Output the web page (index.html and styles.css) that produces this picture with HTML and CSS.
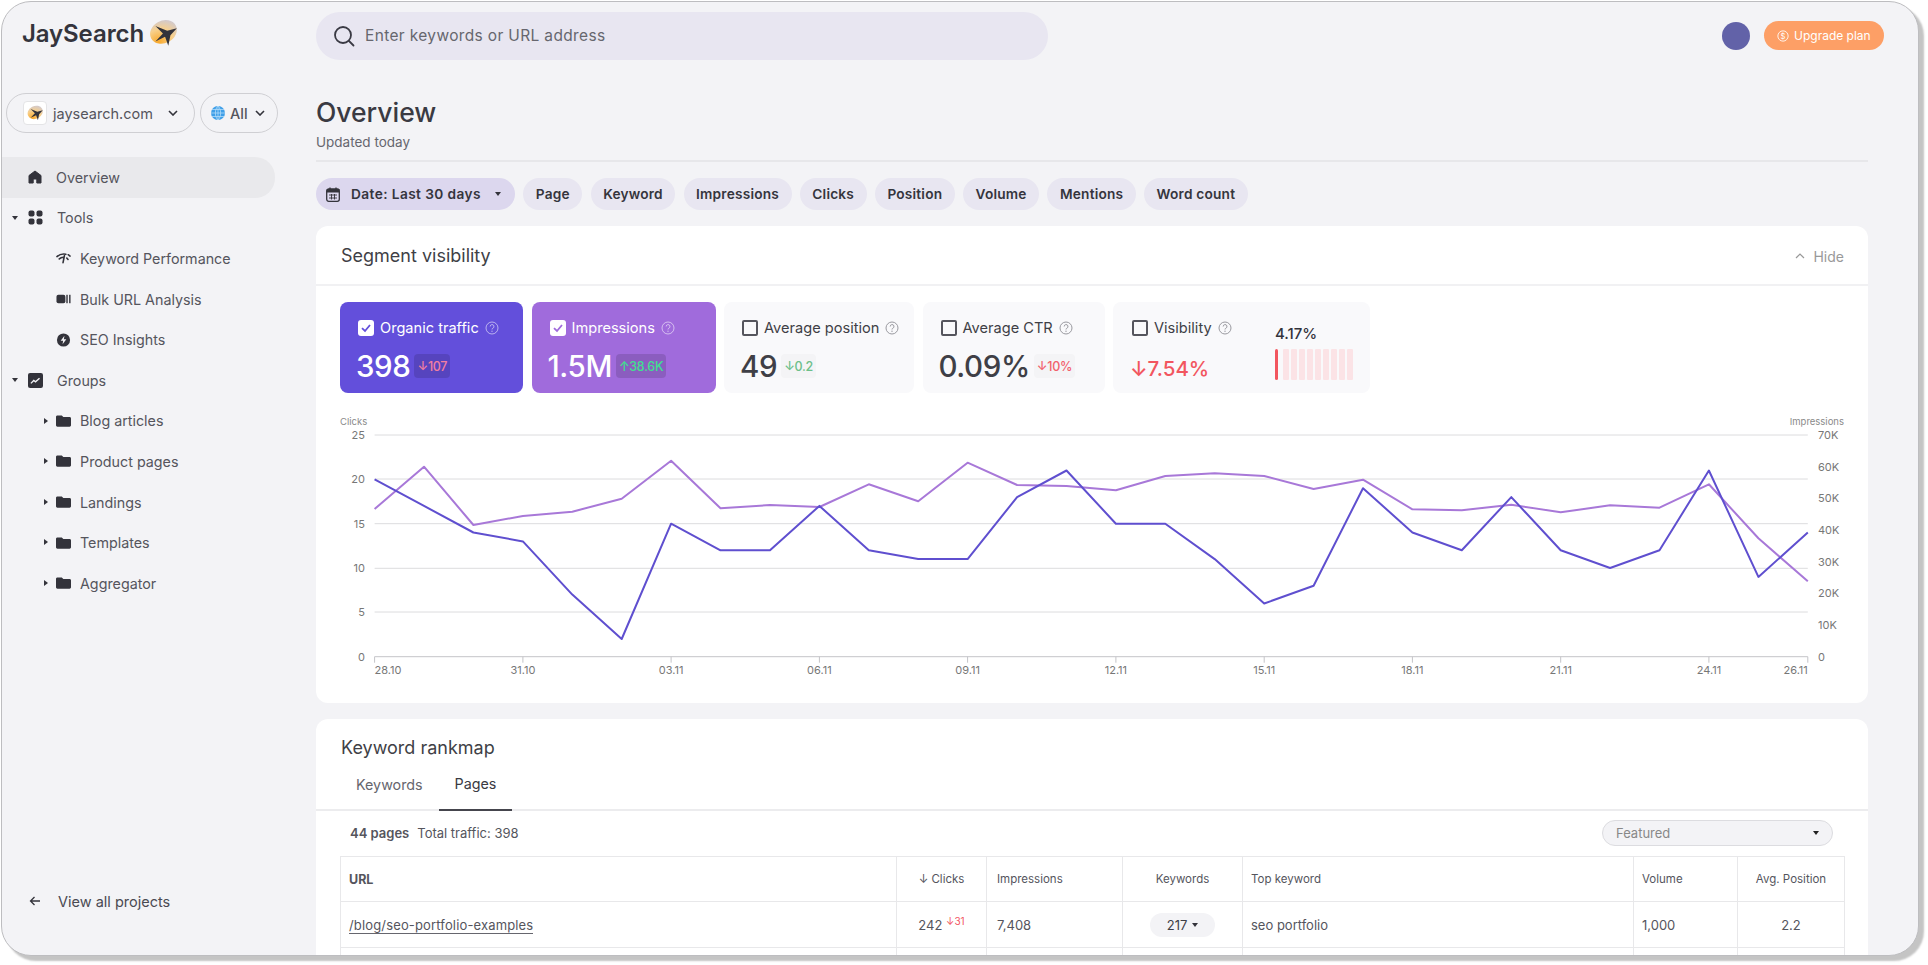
FILE: index.html
```html
<!DOCTYPE html>
<html lang="en">
<head>
<meta charset="utf-8">
<title>JaySearch</title>
<link rel="stylesheet" href="styles.css">
</head>
<body>
<svg class="defs" width="0" height="0" aria-hidden="true">
  <defs>
    <radialGradient id="blob" cx="18%" cy="78%" r="95%">
      <stop offset="0" stop-color="#f9a92c"/>
      <stop offset=".55" stop-color="#f8d08c"/>
      <stop offset="1" stop-color="#cfc9d2"/>
    </radialGradient>
    <symbol id="bird" viewBox="0 0 28 26">
      <ellipse cx="13.5" cy="12" rx="13" ry="10.500" transform="rotate(-28 13.5 12)" fill="url(#blob)"/>
      <path d="M26 8.500 17 11 6 6.500 13 13.500 6 21 15 16.500 18 25 20 15Z" fill="#33333b"/>
    </symbol>
    <symbol id="help" viewBox="0 0 14 14">
      <circle cx="7" cy="7" r="6" fill="none" stroke="currentColor" stroke-width="1"/>
      <path d="M5.200 5.500a1.900 1.900 0 1 1 2.700 1.700c-.6.300-.9.600-.9 1.300" fill="none" stroke="currentColor" stroke-width="1"/>
      <circle cx="7" cy="10.300" r=".7" fill="currentColor"/>
    </symbol>
    <symbol id="folder" viewBox="0 0 16 14">
      <path d="M1.500 1h4.700l1.600 1.700h6.700c.8 0 1.500.7 1.500 1.500v7.300c0 .8-.7 1.500-1.500 1.500H1.500C.7 13 0 12.300 0 11.500v-9C0 1.700.7 1 1.500 1Z" fill="#33333b"/>
    </symbol>
    <symbol id="check" viewBox="0 0 16 16">
      <path d="M4 8.200 7 11l5-6" fill="none" stroke="currentColor" stroke-width="1.800"/>
    </symbol>
  </defs>
</svg>

<div class="window">
  <aside class="sidebar">
    <div class="brand">
      <span class="brand-name">JaySearch</span>
      <svg class="brand-mark"><use href="#bird"/></svg>
    </div>
    <div class="selectors">
      <div class="pill-select project">
        <span class="favicon"><svg class="favicon-mark"><use href="#bird"/></svg></span>
        <span class="project-name">jaysearch.com</span>
        <svg class="chev" viewBox="0 0 10 6"><path d="M1 1l4 4 4-4" fill="none" stroke="#33333b" stroke-width="1.600"/></svg>
      </div>
      <div class="pill-select region">
        <svg class="globe" viewBox="0 0 14 14"><circle cx="7" cy="7" r="7" fill="#3f9fe8"/><path d="M0 7h14M1 3.500h12M1 10.500h12M7 0v14M7 0C3.500 3 3.500 11 7 14M7 0c3.500 3 3.500 11 0 14" fill="none" stroke="#bfe2fb" stroke-width=".7"/></svg>
        <span class="region-name">All</span>
        <svg class="chev" viewBox="0 0 10 6"><path d="M1 1l4 4 4-4" fill="none" stroke="#33333b" stroke-width="1.600"/></svg>
      </div>
    </div>
    <nav class="nav">
      <a class="nav-row active">
        <svg class="nav-icon home" viewBox="0 0 14 14"><path d="M7 1 13 5.500V13H8.800V9H5.200v4H1V5.500Z" fill="#33333b" stroke="#33333b" stroke-linejoin="round"/></svg>
        <span class="nav-label">Overview</span>
      </a>
      <a class="nav-row">
        <span class="caret-down"></span>
        <svg class="nav-icon" viewBox="0 0 15 15"><rect x="0.500" y="0.500" width="6" height="6" rx="2" fill="#33333b"/><rect x="8.500" y="0.500" width="6" height="6" rx="2" fill="#33333b"/><rect x="0.500" y="8.500" width="6" height="6" rx="2" fill="#33333b"/><rect x="8.500" y="8.500" width="6" height="6" rx="2" fill="#33333b"/></svg>
        <span class="nav-label">Tools</span>
      </a>
      <a class="nav-row sub">
        <svg class="sub-icon" viewBox="0 0 16 12"><path d="M1 4.500C4 2 8 1.500 10.500 2M3.500 7C5 5.500 7 5 8.500 5.200M9 3.500 7.500 11M13 2.500l2 1.500M11.500 6l1.300 1.500" fill="none" stroke="#33333b" stroke-width="1.700" stroke-linecap="round"/></svg>
        <span class="nav-label">Keyword Performance</span>
      </a>
      <a class="nav-row sub">
        <svg class="sub-icon" viewBox="0 0 16 12"><rect x="0.500" y="1.500" width="9.500" height="9" rx="2" fill="#33333b"/><rect x="11" y="1.500" width="1.500" height="9" fill="#33333b"/><rect x="14" y="1.500" width="1.500" height="9" fill="#33333b"/></svg>
        <span class="nav-label">Bulk URL Analysis</span>
      </a>
      <a class="nav-row sub">
        <svg class="sub-icon" viewBox="0 0 16 14"><circle cx="8" cy="7" r="7" fill="#33333b"/><path d="M9 2.500 5 7.800h2.600L7 11.500l4-5.300H8.400Z" fill="#f3f3f6"/></svg>
        <span class="nav-label">SEO Insights</span>
      </a>
      <a class="nav-row">
        <span class="caret-down"></span>
        <svg class="nav-icon" viewBox="0 0 13 13"><rect width="13" height="13" rx="1.800" fill="#33333b"/><path d="M2.500 9 5 6.500l1.500 1.200L10 4.500" fill="none" stroke="#f3f3f6" stroke-width="1.200"/></svg>
        <span class="nav-label">Groups</span>
      </a>
      <a class="nav-row sub"><span class="caret-right"></span><svg class="sub-icon"><use href="#folder"/></svg><span class="nav-label">Blog articles</span></a>
      <a class="nav-row sub"><span class="caret-right"></span><svg class="sub-icon"><use href="#folder"/></svg><span class="nav-label">Product pages</span></a>
      <a class="nav-row sub"><span class="caret-right"></span><svg class="sub-icon"><use href="#folder"/></svg><span class="nav-label">Landings</span></a>
      <a class="nav-row sub"><span class="caret-right"></span><svg class="sub-icon"><use href="#folder"/></svg><span class="nav-label">Templates</span></a>
      <a class="nav-row sub"><span class="caret-right"></span><svg class="sub-icon"><use href="#folder"/></svg><span class="nav-label">Aggregator</span></a>
    </nav>
    <a class="back-link">
      <svg class="back-icon" viewBox="0 0 12 10"><path d="M11 5H1.500M5.500 1 1.500 5l4 4" fill="none" stroke="#33333b" stroke-width="1.300"/></svg>
      <span>View all projects</span>
    </a>
  </aside>

  <main class="main">
    <header class="topbar">
      <div class="search">
        <svg class="search-icon" viewBox="0 0 22 22"><circle cx="10" cy="10" r="8" fill="none" stroke="#3a3a44" stroke-width="1.800"/><path d="M16 16l4.500 4.500" stroke="#3a3a44" stroke-width="1.800" stroke-linecap="round"/></svg>
        <span class="search-text">Enter keywords or URL address</span>
      </div>
      <div class="account">
        <span class="avatar"></span>
        <span class="upgrade">
          <svg class="upgrade-icon" viewBox="0 0 14 14"><circle cx="7" cy="7" r="6" fill="none" stroke="#fff" stroke-width="1"/><text class="coin" x="7" y="10">$</text></svg>
          Upgrade plan
        </span>
      </div>
    </header>

    <div class="content">
      <h1 class="title">Overview</h1>
      <p class="updated">Updated today</p>
      <div class="rule"></div>

      <div class="filters">
        <span class="chip chip-date">
          <svg class="cal" viewBox="0 0 14 15"><rect x="0.700" y="2" width="12.600" height="12.300" rx="2" fill="none" stroke="#33333b" stroke-width="1.300"/><rect x="0.700" y="2" width="12.600" height="3.500" fill="#33333b"/><path d="M4 0.500v3M10 0.500v3" stroke="#33333b" stroke-width="1.300"/><path d="M3 8h8M3 11h8M5.500 7v5.500M8.500 7v5.500" stroke="#33333b" stroke-width=".9"/></svg>
          <span class="chip-date-text">Date: Last 30 days</span>
          <span class="caret-down chip-caret"></span>
        </span>
        <span class="chip">Page</span>
        <span class="chip">Keyword</span>
        <span class="chip">Impressions</span>
        <span class="chip">Clicks</span>
        <span class="chip">Position</span>
        <span class="chip">Volume</span>
        <span class="chip">Mentions</span>
        <span class="chip">Word count</span>
      </div>

      <section class="card segment">
        <div class="card-head">
          <h2 class="card-title">Segment visibility</h2>
          <span class="hide"><svg class="hide-icon" viewBox="0 0 10 6"><path d="M1 5l4-4 4 4" fill="none" stroke="#999" stroke-width="1.200"/></svg>Hide</span>
        </div>

        <div class="metrics">
          <div class="metric metric-traffic">
            <div class="metric-label"><span class="box on traffic-check"><svg class="tick"><use href="#check"/></svg></span>Organic traffic<svg class="help"><use href="#help"/></svg></div>
            <div class="metric-data"><span class="metric-value">398</span><span class="delta delta-dark red-light">↓107</span></div>
          </div>
          <div class="metric metric-impr">
            <div class="metric-label"><span class="box on impr-check"><svg class="tick"><use href="#check"/></svg></span>Impressions<svg class="help"><use href="#help"/></svg></div>
            <div class="metric-data"><span class="metric-value">1.5M</span><span class="delta delta-dark green-light">↑38.6K</span></div>
          </div>
          <div class="metric metric-pos">
            <div class="metric-label"><span class="box"></span>Average position<svg class="help"><use href="#help"/></svg></div>
            <div class="metric-data"><span class="metric-value">49</span><span class="delta green">↓0.2</span></div>
          </div>
          <div class="metric metric-ctr">
            <div class="metric-label"><span class="box"></span>Average CTR<svg class="help"><use href="#help"/></svg></div>
            <div class="metric-data"><span class="metric-value">0.09%</span><span class="delta red">↓10%</span></div>
          </div>
          <div class="metric metric-vis">
            <div class="vis-left">
              <div class="metric-label"><span class="box"></span>Visibility<svg class="help"><use href="#help"/></svg></div>
              <div class="vis-value">↓7.54%</div>
            </div>
            <div class="vis-right">
              <div class="vis-share">4.17%</div>
              <div class="vis-bars">
                <span class="vis-bar first"></span><span class="vis-bar"></span><span class="vis-bar"></span><span class="vis-bar"></span><span class="vis-bar"></span><span class="vis-bar"></span><span class="vis-bar"></span><span class="vis-bar"></span><span class="vis-bar"></span><span class="vis-bar"></span>
              </div>
            </div>
          </div>
        </div>

        <svg class="chart" width="1508" height="293" viewBox="0 0 1508 293">
          <g class="grid">
            <line x1="34.600" x2="1467.800" y1="25" y2="25"/>
            <line x1="34.600" x2="1467.800" y1="69" y2="69"/>
            <line x1="34.600" x2="1467.800" y1="113.700" y2="113.700"/>
            <line x1="34.600" x2="1467.800" y1="158.300" y2="158.300"/>
            <line x1="34.600" x2="1467.800" y1="202" y2="202"/>
            <line class="axis" x1="34.600" x2="1467.800" y1="246.700" y2="246.700"/>
            <path class="axis" d="M34.600 246.700v6M182.900 246.700v6M331.100 246.700v6M479.400 246.700v6M627.600 246.700v6M775.900 246.700v6M924.200 246.700v6M1072.400 246.700v6M1220.700 246.700v6M1368.900 246.700v6M1467.800 246.700v6"/>
          </g>
          <polyline class="line-impr" points="34.600,99 84,56.700 133.400,115 182.900,106 232.300,101.700 281.700,88.700 331.100,50.700 380.500,98.300 430,95 479.400,97 528.800,74.300 578.200,91.300 627.600,52.700 677.100,75 726.500,76 775.900,80.300 825.300,66 874.700,63.300 924.200,66 973.600,79 1023,69.700 1072.400,99.300 1121.800,100.300 1171.300,94.700 1220.700,102.300 1270.100,95.300 1319.500,97.700 1368.900,74.300 1418.400,128.300 1467.800,171.300"/>
          <polyline class="line-clicks" points="34.600,69.300 84,95.900 133.400,122.500 182.900,131.400 232.300,184.600 281.700,229 331.100,113.700 380.500,140.300 430,140.300 479.400,95.900 528.800,140.300 578.200,149.100 627.600,149.100 677.100,87.100 726.500,60.500 775.900,113.700 825.300,113.700 874.700,149.100 924.200,193.500 973.600,175.800 1023,78.200 1072.400,122.500 1121.800,140.300 1171.300,87.100 1220.700,140.300 1270.100,158 1319.500,140.300 1368.900,60.500 1418.400,166.900 1467.800,122.500"/>
          <g class="tick-text">
            <text class="small" x="0" y="15">Clicks</text>
            <text class="small end" x="1504" y="15">Impressions</text>
            <g class="end">
              <text x="25" y="29">25</text><text x="25" y="73">20</text><text x="25" y="118">15</text><text x="25" y="162">10</text><text x="25" y="206">5</text><text x="25" y="251">0</text>
            </g>
            <text x="1478" y="29">70K</text><text x="1478" y="61">60K</text><text x="1478" y="92">50K</text><text x="1478" y="124">40K</text><text x="1478" y="156">30K</text><text x="1478" y="187">20K</text><text x="1478" y="219">10K</text><text x="1478" y="251">0</text>
            <text x="34.600" y="264">28.10</text>
            <g class="mid">
              <text x="182.900" y="264">31.10</text><text x="331.100" y="264">03.11</text><text x="479.400" y="264">06.11</text><text x="627.600" y="264">09.11</text><text x="775.900" y="264">12.11</text><text x="924.200" y="264">15.11</text><text x="1072.400" y="264">18.11</text><text x="1220.700" y="264">21.11</text><text x="1368.900" y="264">24.11</text>
            </g>
            <text class="end" x="1467.800" y="264">26.11</text>
          </g>
        </svg>
      </section>

      <section class="card rankmap">
        <h2 class="card-title rank-title">Keyword rankmap</h2>
        <div class="tabs">
          <span class="tab">Keywords</span>
          <span class="tab tab-active">Pages</span>
        </div>
        <div class="summary">
          <div class="summary-text"><b>44 pages</b><span>Total traffic: 398</span></div>
          <div class="sort"><span>Featured</span><span class="caret-down sort-caret"></span></div>
        </div>
        <table class="table">
          <colgroup>
            <col class="c-url"><col class="c-clicks"><col class="c-impr"><col class="c-kw"><col class="c-top"><col class="c-vol"><col class="c-avg">
          </colgroup>
          <thead>
            <tr>
              <th class="th-url">URL</th>
              <th class="center">↓ Clicks</th>
              <th class="pad-impr">Impressions</th>
              <th class="center">Keywords</th>
              <th>Top keyword</th>
              <th>Volume</th>
              <th class="center">Avg. Position</th>
            </tr>
          </thead>
          <tbody>
            <tr>
              <td><a class="url">/blog/seo-portfolio-examples</a></td>
              <td class="center">242 <sup class="sup-red">↓31</sup></td>
              <td class="pad-impr">7,408</td>
              <td class="center"><span class="kw-pill">217 <span class="caret-down pill-caret"></span></span></td>
              <td>seo portfolio</td>
              <td>1,000</td>
              <td class="center">2.2</td>
            </tr>
            <tr><td></td><td></td><td></td><td></td><td></td><td></td><td></td></tr>
          </tbody>
        </table>
      </section>
    </div>
  </main>
</div>
</body>
</html>
```

FILE: styles.css
```css
* { box-sizing: border-box; }
html, body { margin: 0; height: 100%; overflow: hidden; background: #fff; }
body { font-family: Inter, "Liberation Sans", sans-serif; color: #3f3f46; }
.defs { position: absolute; }
h1, h2, p { margin: 0; }

.window {
  display: flex;
  width: 1918px;
  height: 955px;
  margin: 1px 0 0 1px;
  background: #f3f3f6;
  border: 1.5px solid #bdbdc0;
  border-radius: 30px;
  box-shadow: 5px 5px 2px #c4c4c4;
  overflow: hidden;
}

/* Sidebar */
.sidebar { display: flex; flex-direction: column; flex: 0 0 314px; width: 314px; height: 100%; }
.brand { display: flex; align-items: center; gap: 5px; height: 62px; padding-left: 20px; }
.brand-name { font-size: 24px; font-weight: 600; color: #34343c; letter-spacing: -.1px; }
.brand-mark { width: 30px; height: 28px; }
.selectors { display: flex; gap: 5px; height: 40px; margin-top: 29px; padding-left: 4px; }
.pill-select { display: flex; align-items: center; height: 40px; border: 1px solid #cfcfd3; border-radius: 20px; }
.project { width: 189px; padding: 0 16px 0 16px; }
.favicon { display: flex; align-items: center; justify-content: center; width: 24px; height: 24px; background: #fff; border: 1px solid #e4e4e6; border-radius: 4px; }
.favicon-mark { width: 17px; height: 16px; }
.project-name { margin-left: 6px; font-size: 14.5px; color: #55555d; }
.chev { width: 10px; height: 6px; margin-left: auto; }
.region { width: 78px; padding: 0 12px 0 10px; }
.globe { width: 14px; height: 14px; }
.region-name { margin-left: 5px; font-size: 14.5px; font-weight: 500; color: #55555d; }

.nav { margin-top: 24px; }
.nav-row { position: relative; display: flex; align-items: center; height: 40.6px; padding-left: 26px; font-size: 14.3px; color: #55555d; }
.nav-row.active { width: 273px; background: #e9e9ec; border-radius: 0 20px 20px 0; }
.nav-icon { width: 15px; height: 15px; flex: none; }
.home { width: 14px; height: 14px; }
.nav-label { margin-left: 14px; white-space: nowrap; }
.caret-down { display: inline-block; flex: none; width: 0; height: 0; border-left: 3.500px solid transparent; border-right: 3.500px solid transparent; border-top: 4px solid #33333b; }
.caret-right { display: inline-block; flex: none; width: 0; height: 0; border-top: 3.500px solid transparent; border-bottom: 3.500px solid transparent; border-left: 4px solid #33333b; }
.nav-row > .caret-down { position: absolute; left: 10px; top: 18px; }
.nav-row.sub { padding-left: 54px; }
.nav-row.sub > .caret-right { position: absolute; left: 42px; top: 17px; }
.sub-icon { width: 15px; height: 14px; flex: none; }
.nav-row.sub .nav-label { margin-left: 9px; }

.back-link { display: flex; align-items: center; margin-top: auto; height: 40px; margin-bottom: 34px; padding-left: 27px; font-size: 14.5px; color: #4a4a52; }
.back-icon { width: 12px; height: 10px; margin-right: 17px; }

/* Main */
.main { flex: 1; min-width: 0; height: 100%; overflow: hidden; }
.topbar { display: flex; justify-content: space-between; align-items: flex-start; padding: 10px 34px 0 0; }
.search { display: flex; align-items: center; width: 732px; height: 48px; padding-left: 17px; background: #e8e6f1; border-radius: 24px; }
.search-icon { width: 22px; height: 22px; }
.search-text { margin: -2px 0 0 10px; font-size: 15.5px; letter-spacing: .35px; color: #66666e; }
.account { display: flex; align-items: center; gap: 14px; margin-top: 9px; }
.avatar { width: 28px; height: 28px; background: #6262a8; border-radius: 50%; }
.upgrade { display: flex; align-items: center; gap: 5px; width: 120px; height: 29px; padding-left: 13px; background: #fd9f66; border-radius: 15px; color: #fff; font-size: 12px; }
.upgrade-icon { width: 12px; height: 12px; }
.coin { font-size: 9px; fill: #fff; text-anchor: middle; }

.content { width: 1552px; }
.title { margin-top: 34px; font-size: 26.500px; line-height: 36px; font-weight: 500; color: #3a3a42; }
.updated { margin-top: 3px; font-size: 13.500px; line-height: 18px; color: #66666e; }
.rule { height: 2px; margin-top: 9px; background: #e7e7ea; }

.filters { display: flex; gap: 8.300px; margin-top: 16px; }
.chip { display: flex; align-items: center; height: 32px; padding: 0 12.500px; background: #e8e6f1; border-radius: 16px; font-size: 13.700px; font-weight: 600; letter-spacing: .2px; color: #35353d; white-space: nowrap; }
.chip-date { width: 199px; padding: 0 0 0 10px; background: #dcd7ee; }
.chip-date-text { margin-left: 1px; letter-spacing: .4px; }
.cal { width: 14px; height: 15px; margin-right: 10px; }
.chip-caret { margin-left: 14px; }

.card { background: #fff; border-radius: 12px; }
.segment { height: 477px; margin-top: 16px; }
.card-head { display: flex; justify-content: space-between; align-items: center; height: 60px; padding: 2px 24px 0 25px; border-bottom: 2px solid #f1f1f3; }
.card-title { font-size: 18px; font-weight: 400; color: #3f3f46; line-height: 24px; }
.hide { display: flex; align-items: center; gap: 8px; font-size: 14px; color: #999; }
.hide-icon { width: 10px; height: 6px; }

.metrics { display: flex; gap: 8.500px; height: 91px; margin: 16px 0 0 24px; }
.metric { height: 91px; padding: 17px 0 0 18px; background: #f9f9fb; border-radius: 8px; color: #3f3f46; }
.metric-traffic { width: 183px; background: #634fdb; color: #fff; }
.metric-impr { width: 184px; background: #a06bdc; color: #fff; }
.metric-pos { width: 190px; }
.metric-ctr { width: 182px; }
.metric-vis { display: flex; width: 257px; padding-left: 19px; }
.metric-label { display: flex; align-items: center; height: 18px; font-size: 14.600px; white-space: nowrap; }
.box { display: flex; width: 16px; height: 16px; margin-right: 6px; border: 2px solid #55555d; border-radius: 2px; }
.box.on { background: #fff; border: 0; border-radius: 3px; }
.tick { width: 16px; height: 16px; }
.traffic-check { color: #634fdb; }
.impr-check { color: #a06bdc; }
.help { width: 14px; height: 14px; margin-left: 6px; color: #9a9aa0; }
.metric-traffic .help, .metric-impr .help { color: rgba(255,255,255,.55); }
.metric-data { display: flex; align-items: center; gap: 4px; height: 34px; margin: 12px 0 0 -2px; }
.metric-value { font-size: 29.500px; font-weight: 500; letter-spacing: -.4px; }
.delta { display: flex; align-items: center; height: 24px; padding: 0 3px; border-radius: 4px; background: #f4f4f6; font-size: 12.500px; font-weight: 500; letter-spacing: -.3px; }
.delta-dark { background: rgba(0,0,0,.13); }
.red-light { color: #f27fa0; }
.green-light { color: #3fe08f; }
.green { color: #6cbf8a; }
.red { color: #f2616b; }
.vis-left { width: 143px; margin-left: -2px; padding-left: 2px; }
.vis-value { margin: 19px 0 0 -2px; font-size: 20.500px; font-weight: 500; color: #f2565f; }
.vis-right { margin-top: 6px; margin-left: 2px; }
.vis-share { font-size: 15px; font-weight: 500; line-height: 18px; color: #33333b; }
.vis-bars { display: flex; gap: 2px; margin-top: 6px; }
.vis-bar { width: 6px; height: 31px; background: #fbe3e6; border-radius: 1px; }
.vis-bar.first { width: 3px; margin-right: 3px; background: #f2565f; border-radius: 2px; }

.chart { display: block; margin: 17px 0 0 24px; overflow: visible; }
.grid line { stroke: #dcdcde; stroke-width: 1; }
.grid .axis { stroke: #c4c4c8; fill: none; stroke-width: 1; }
.line-impr { fill: none; stroke: #a878d8; stroke-width: 2; stroke-linejoin: round; }
.line-clicks { fill: none; stroke: #5f4fcf; stroke-width: 2; stroke-linejoin: round; }
.tick-text text { font-family: Inter, "Liberation Sans", sans-serif; font-size: 11px; fill: #777; }
.tick-text .small { font-size: 9.500px; fill: #8a8a8a; }
.end text, text.end { text-anchor: end; }
.mid text { text-anchor: middle; }

.rankmap { height: 320px; margin-top: 16px; overflow: hidden; }
.rank-title { padding: 17px 0 0 25px; height: 41px; }
.tabs { display: flex; height: 51px; padding-left: 24px; border-bottom: 2px solid #ececee; }
.tab { display: flex; align-items: center; padding: 0 16px 2px; height: 51px; font-size: 14.300px; color: #66666e; }
.tab-active { color: #3a3a42; border-bottom: 2px solid #45454d; }
.summary { display: flex; justify-content: space-between; align-items: center; height: 26px; margin-top: 9px; padding: 0 35px 0 34px; }
.summary-text { display: flex; gap: 8px; font-size: 13px; color: #55555d; }
.summary-text b { font-weight: 600; }
.sort { display: flex; justify-content: space-between; align-items: center; width: 231px; height: 26px; padding: 0 13px; background: #f3f3f6; border: 1px solid #dcdce0; border-radius: 13px; font-size: 13px; color: #888; }
.sort-caret { border-top-color: #222; }

.table { width: 1504px; margin: 10px 0 0 24px; border-collapse: collapse; table-layout: fixed; font-size: 13px; color: #55555d; }
.table th, .table td { height: 46px; padding: 0 8px; border: 1.5px solid #e8e8ea; font-weight: 400; text-align: left; white-space: nowrap; }
.table th { height: 45px; font-size: 11.500px; }
.table .th-url { font-size: 12.500px; font-weight: 700; }
.table .center { text-align: center; }
.table .pad-impr { padding-left: 10px; }
.c-url { width: 556px; }
.c-clicks { width: 90px; }
.c-impr { width: 136px; }
.c-kw { width: 120px; }
.c-top { width: 391px; }
.c-vol { width: 104px; }
.c-avg { width: 107px; }
.url { color: #55555d; border-bottom: 1.500px solid #66666e; letter-spacing: .15px; }
.sup-red { font-size: 10px; color: #f2565f; line-height: 0; }
.kw-pill { display: inline-flex; align-items: center; justify-content: center; gap: 5px; width: 65px; height: 24px; background: #f3f3f6; border-radius: 12px; color: #3f3f46; }
.pill-caret { border-top-color: #33333b; }
```
